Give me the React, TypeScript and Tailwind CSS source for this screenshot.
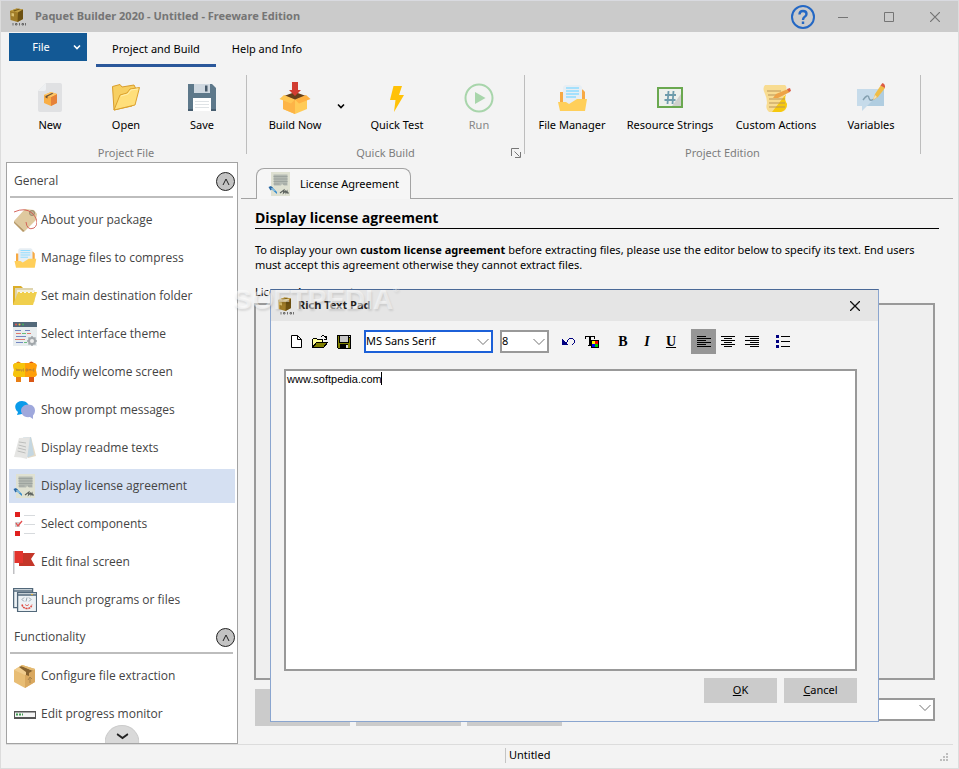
import type { ReactNode } from 'react';

type IconProps = { className?: string };

function PackageLogo({ className }: IconProps) {
  return (
    <svg viewBox="0 0 18 18" className={className} aria-hidden="true">
      <path d="M1 3 7.500.500 14 1.500v9.500L8.500 14 1.500 12z" fill="#a07c28" />
      <path d="M1 3 7.500.500 14 1.500 9 4.500z" fill="#c3a044" />
      <path d="m9 4.500 5-3V11l-5.500 3z" fill="#6d5112" />
      <path d="M2.500 5 5 5.500v3L2.500 8z" fill="#dcc272" />
      <path d="m4 2.500 6-1.800 1.500.3-6 2.500z" fill="#775a19" />
      <path d="M4 15v2.500M6.500 15.500h1.500v1.500H6.500zM10.500 15v2.500M13 15.500h1.500v1.500H13zM16.500 15v2.500" stroke="#444" strokeWidth=".7" fill="none" />
    </svg>
  );
}

function NewIcon({ className }: IconProps) {
  return (
    <svg viewBox="0 0 32 32" className={className} aria-hidden="true">
      <path d="M12 1h14q2 0 2 2v25q0 2-2 2H6q-2 0-2-2V9z" fill="#e0e1e3" />
      <path d="M12 1v6q0 2-2 2H4z" fill="#eef0f2" />
      <path d="m10 13 7-3 6 2v9l-6 3-7-3z" fill="#f9ae45" />
      <path d="m17 15 6-3v9l-6 3z" fill="#e6823a" />
      <path d="m10 13 7-3 6 2-6 3z" fill="#ffc766" />
      <path d="m11.500 14 6.500-3 1.500.5-6 3v2l-2-1z" fill="#6b5238" />
    </svg>
  );
}

function OpenIcon({ className }: IconProps) {
  return (
    <svg viewBox="0 0 32 32" className={className} aria-hidden="true">
      <path d="M2.500 4.500 10 2.500l2 2.500 12-2 1.500 3L22 24 4 28z" fill="#f7cf62" stroke="#d99d2b" />
      <path d="m10 13 7-2 3-4 9.500-1.500L25 23 4 28z" fill="#ffdf7b" stroke="#dca12c" />
      <path d="m11 14 7-2 3-4 7-1" stroke="#fff0ad" fill="none" />
    </svg>
  );
}

function SaveIcon({ className }: IconProps) {
  return (
    <svg viewBox="0 0 32 32" className={className} aria-hidden="true">
      <path d="M2 2h24l4 4v23H2z" fill="#5d788a" />
      <path d="M8 2h16v9H8z" fill="#cfd8e0" />
      <path d="M19 3.500h2.500v6H19z" fill="#465969" />
      <path d="M7 16h18v13H7z" fill="#fff" />
      <path d="M9 19.500h14M9 22.500h14M9 25.500h14" stroke="#dfe3e6" />
      <path d="M2 27h5v2H2zM25 27h5v2h-5z" fill="#465d6f" />
    </svg>
  );
}

function BuildIcon({ className }: IconProps) {
  return (
    <svg viewBox="0 0 32 32" className={className} aria-hidden="true">
      <path d="m4 15 12 3 12-3v12l-12 5-12-5z" fill="#ffcb57" />
      <path d="M4 15v12l12 5V18z" fill="#fdb447" />
      <path d="m5 14 11-4 11 4-11 4z" fill="#65401b" />
      <path d="M5 13 .500 17 12 21.500l4-4z" fill="#ffc653" />
      <path d="m27 13 4.500 4L20 21.500l-4-4z" fill="#ffb142" />
      <path d="M13 0h6v8h3l-6 6-6-6h3z" fill="#d13d32" />
    </svg>
  );
}

function QuickTestIcon({ className }: IconProps) {
  return (
    <svg viewBox="0 0 32 32" className={className} aria-hidden="true">
      <path d="M12.500 4H21l-3 9h5L13 30l1.500-12H9z" fill="#ffc107" />
    </svg>
  );
}

function RunIcon({ className }: IconProps) {
  return (
    <svg viewBox="0 0 32 32" className={className} aria-hidden="true">
      <circle cx="16" cy="16" r="13.500" fill="none" stroke="#a8d5ab" strokeWidth="2" />
      <path d="m12 10 10.500 6L12 22z" fill="#a8d5ab" />
    </svg>
  );
}

function FilesIcon({ className }: IconProps) {
  return (
    <svg viewBox="0 0 32 32" className={className} aria-hidden="true">
      <path d="M4 10h5v14H4zM23 10q0-3 2-3t4 3v12h-6z" fill="#f7a943" />
      <path d="M9 3h15l2 2v18H7V5z" fill="#e7eef3" />
      <path d="M10 6h13M10 9h13M10 12h13M10 15h10" stroke="#8fdcff" strokeWidth="1.300" />
      <path d="M2 20h8l3 2 8-5h10l-2 12H4z" fill="#ffcf5a" />
    </svg>
  );
}

function ResourceIcon({ className }: IconProps) {
  return (
    <svg viewBox="0 0 32 32" className={className} aria-hidden="true">
      <path d="M4 6h24v19H4z" fill="#edf0ec" stroke="#6aa84f" strokeWidth="2" />
      <path d="M27 12v12h-9z" fill="#cfd0cd" />
      <path d="m14.500 9-1 13M19.500 9l-1 13M11 13h11M10.500 18h11" stroke="#6e9cac" strokeWidth="1.800" />
    </svg>
  );
}

function ActionsIcon({ className }: IconProps) {
  return (
    <svg viewBox="0 0 32 32" className={className} aria-hidden="true">
      <path d="M5 3h20q3 2 0 7-2 6 2 12 0 7-6 8H9q-4-3-2-9 0-5-2-9-3-6 0-9z" fill="#f8dc91" />
      <path d="m26 12-14 18h9q6-2 6-8-3-4-1-10z" fill="#f6c90e" />
      <path d="M7 9h14M8 13h8M9 17h16M9 21h16M9 25h16" stroke="#b9955b" strokeWidth="1.200" />
      <path d="m13 16 3-4 12-5 2 3-12 6z" fill="#eda348" />
      <path d="m27 7 3-1 1 3-2 1z" fill="#d95e48" />
    </svg>
  );
}

function VariablesIcon({ className }: IconProps) {
  return (
    <svg viewBox="0 0 32 32" className={className} aria-hidden="true">
      <path d="M2 7h27v17H12l-5 5v-5H2z" fill="#c6dbea" />
      <path d="M29 7v17H12z" fill="#b0cde0" />
      <path d="M8 18q5-7 6-2 1 4 5 1" fill="none" stroke="#84a0b0" strokeWidth="1.400" />
      <path d="m18 18 2-6 6-9 4 3-7 9z" fill="#efbd48" />
      <path d="m18 18 2-5 2 2z" fill="#f5dfb7" />
      <path d="m25.500 3.500 2-2.500q3 1 2.500 5z" fill="#dc5b43" />
    </svg>
  );
}

function TagIcon({ className }: IconProps) {
  return (
    <svg viewBox="0 0 24 24" className={className} aria-hidden="true">
      <path d="M1 13 12 1l9 1 3 4-1 6-11 11z" fill="#dfc99f" />
      <path d="m1 13 11 10-2 1L1 15z" fill="#b89a68" />
      <circle cx="19" cy="5" r="2.500" fill="#bfae8e" stroke="#9b8a6c" />
      <path d="M1 4Q12-1 19 5c5 5 7 11 2 15q-7 3-8-6" fill="none" stroke="#d05850" strokeWidth=".9" />
    </svg>
  );
}

function FolderIcon({ className }: IconProps) {
  return (
    <svg viewBox="0 0 24 24" className={className} aria-hidden="true">
      <path d="M0 2h8l2 2h9v17H0z" fill="#dcae28" />
      <path d="M2 4h18v12H2z" fill="#dfd5ae" />
      <path d="M4 6h18v12H4z" fill="#f3efdf" />
      <path d="m5 8h19l-4 13H0z" fill="#f0cf4d" />
      <path d="M8 8v1M12 8v1M16 8v1M20 8v1" stroke="#faf8ef" strokeWidth="2" />
    </svg>
  );
}

function ThemeIcon({ className }: IconProps) {
  return (
    <svg viewBox="0 0 24 24" className={className} aria-hidden="true">
      <path d="M0 0h24v24H0z" fill="#e8edef" />
      <path d="M0 0h24v5H0z" fill="#53697a" />
      <circle cx="3" cy="2.500" r="1" fill="#ee5748" />
      <circle cx="6.500" cy="2.500" r="1" fill="#f4c13d" />
      <circle cx="10" cy="2.500" r="1" fill="#43b45c" />
      <path d="M2 8.500h6M12 8.500h5M3 14.500h10M3 20.500h7" stroke="#7387c2" />
      <path d="M3 11.500h5M14 11.500h4M2 17.500h10" stroke="#e0796d" />
      <path d="M9 11.500h4M11 20.500h3" stroke="#68bd7d" />
      <circle cx="19" cy="19" r="3" fill="#eee" stroke="#a1a7ab" strokeWidth="2" />
      <path d="M19 14v2M19 22v2M14 19h2M22 19h2M15.500 15.500l1.500 1.500M21 21l1.500 1.500M15.500 22.500 17 21M21 17l1.500-1.500" stroke="#a1a7ab" strokeWidth="1.500" />
    </svg>
  );
}

function WelcomeIcon({ className }: IconProps) {
  return (
    <svg viewBox="0 0 24 24" className={className} aria-hidden="true">
      <path d="M3 3q2-3 5 0v19H3z" fill="#e87f14" />
      <path d="M16 3q2-3 5 0v19h-5z" fill="#d95716" />
      <path d="M2 3h20l2 2-1 5 1 5-2 2H2l-2-2 1-5-1-5z" fill="#ff9f09" />
      <path d="M2 3h10v14H2l-2-2 1-5-1-5z" fill="#f6c40c" />
      <path d="M3 8.500 4 11l1-2 1 2 1-2M8 9v2h1M11 9h-1v2h1M13 9h1.500v2H13zM16 11V9l1 1 1-1v2M20 9h1.500M20 9v2h1.500" fill="none" stroke="#a87a45" strokeWidth=".7" />
    </svg>
  );
}

function ChatIcon({ className }: IconProps) {
  return (
    <svg viewBox="0 0 24 24" className={className} aria-hidden="true">
      <path d="M9 3c4 0 7 3 7 6s-3 7-7 7l-5 1 1-3c-5-4-3-11 4-11z" fill="#0a9bea" />
      <path d="M15 6.500c5 0 7 3 7 6 0 2-1 4-2 5v3.500l-3-2c-7 1-9-4-9-6.500 0-3 3-6 7-6z" fill="#9fa8dc" />
    </svg>
  );
}

function ReadmeIcon({ className }: IconProps) {
  return (
    <svg viewBox="0 0 24 24" className={className} aria-hidden="true">
      <path d="m14 2 4-1 5 19-8 2z" fill="#e4dac6" />
      <path d="m10 1.500 8-.5 3 18-8 3z" fill="#c5d7e1" />
      <path d="M6 2q6 0 11-1l-3 22q-6-2-13-2z" fill="#e5e5e3" />
      <path d="m6 6 7 1M5.500 9l7.500 2M5 12l8 2M4.500 15l8 2" stroke="#b3b4b3" strokeWidth=".8" />
    </svg>
  );
}

function LicenseIcon({ className }: IconProps) {
  return (
    <svg viewBox="0 0 24 24" className={className} aria-hidden="true">
      <path d="M3 0h19v24H3z" fill="#dfe1d2" />
      <path d="M5.500 2.500h14v11H16L14 12l-1 1.500H6z" fill="#b3b9b2" />
      <path d="M5.500 4.500h14M5.500 7h14M5.500 9.500h14M5.500 12h6M15 12h4" stroke="#9ba29d" strokeWidth=".9" />
      <path d="m2 16 2-1 5 5v2z" fill="#368dcd" />
      <path d="m.500 15 2.500-1 2 2-2.500 2.500z" fill="#2a6aa5" />
      <path d="m3.500 16 3 3" stroke="#c4e4f5" />
      <path d="m12 21 4-3-.5 3 2-2 .5 2 1-2 .5 2H21" fill="none" stroke="#5a605c" strokeWidth="1.100" />
    </svg>
  );
}

function ComponentsIcon({ className }: IconProps) {
  return (
    <svg viewBox="0 0 24 24" className={className} aria-hidden="true">
      <path d="M2 0h5v5H2zM2 19h5v5H2z" fill="#e0201e" />
      <path d="M2 10h5v5H2z" fill="#cfcfcf" />
      <path d="m3 11 2 3 4-5" fill="none" stroke="#e44c4c" strokeWidth="1.300" />
      <path d="M11 3.500h11M11 12.500h11M11 21.500h11" stroke="#d7dadd" />
    </svg>
  );
}

function FlagIcon({ className }: IconProps) {
  return (
    <svg viewBox="0 0 24 24" className={className} aria-hidden="true">
      <path d="M0 1h1.500v23H0z" fill="#c0c0c3" />
      <path d="M6 3h16l-4 6 4 7H6z" fill="#c43629" />
      <path d="M1.500 1H10v12H1.500z" fill="#e2342d" />
    </svg>
  );
}

function LaunchIcon({ className }: IconProps) {
  return (
    <svg viewBox="0 0 24 24" className={className} aria-hidden="true">
      <path d="M.600.600h19v19H.600z" fill="#edf2f5" stroke="#52687a" strokeWidth="1.300" />
      <path d="M1 3h18" stroke="#52687a" strokeWidth="1.500" />
      <path d="M4.600 4.600h19v19h-19z" fill="#edf2f5" stroke="#52687a" strokeWidth="1.300" />
      <path d="M5 7h18" stroke="#52687a" strokeWidth="1.500" />
      <path d="M18 6.500h2" stroke="#e3af3b" />
      <path d="m11 9.500-2 2 2 2M16 9.500l2 2-2 2M14 9.500l-1 4" fill="none" stroke="#8a98a3" strokeWidth=".9" />
      <path d="M9 16.500q1 4 5 4t5-4" fill="none" stroke="#dd4a40" strokeWidth="1.600" strokeDasharray="2 .7" />
      <path d="M12 16.500q2 2.500 4 0" fill="none" stroke="#dd4a40" strokeWidth=".8" />
    </svg>
  );
}

function BoxIcon({ className }: IconProps) {
  return (
    <svg viewBox="0 0 24 24" className={className} aria-hidden="true">
      <path d="m1 6 8-5 13 4v13l-10 6-11-6z" fill="#e8bd74" />
      <path d="m12 11 10-6v13l-10 6z" fill="#d9a85f" />
      <path d="m1 6 8-5 13 4-10 6z" fill="#f0cc8d" />
      <path d="m6 3 3-1 9 4 2 .500-4 2.500v3l-3-1V8z" fill="#86622f" />
      <path d="m9 1 13 4-3 1.500L8 2z" fill="#e3b970" />
      <path d="m15 16 2-3 2 2M17 13v6" fill="none" stroke="#a9834a" />
    </svg>
  );
}

function ProgressIcon({ className }: IconProps) {
  return (
    <svg viewBox="0 0 24 24" className={className} aria-hidden="true">
      <path d="M1 9h22v8H1z" fill="#555" />
      <path d="M2 10.500h20v4.500H2z" fill="#f5f5f5" />
      <path d="M3 11.500h2v2H3zM6 11.500h2v2H6zM9 11.500h1v2H9z" fill="#3f9c50" />
    </svg>
  );
}

function Chevron({ className }: IconProps) {
  return (
    <svg viewBox="0 0 8 8" className={className} aria-hidden="true">
      <path d="m1 2.500 3 3 3-3" fill="none" stroke="currentColor" strokeWidth="1.600" />
    </svg>
  );
}

function ComboArrow() {
  return (
    <svg viewBox="0 0 12 8" className="pointer-events-none absolute top-1/2 right-1 h-2 w-3 -translate-y-1/2 text-neutral-500" aria-hidden="true">
      <path d="m.500 1 5.500 5.500L11.500 1" fill="none" stroke="currentColor" />
    </svg>
  );
}

type RibbonButtonProps = {
  label: string;
  icon: ReactNode;
  width: string;
  disabled?: boolean;
};

function RibbonButton({ label, icon, width, disabled }: RibbonButtonProps) {
  return (
    <button
      type="button"
      disabled={disabled}
      className={`flex flex-col items-center whitespace-nowrap pt-[7px] text-black disabled:text-[#868686] ${width}`}
    >
      {icon}
      <span className="mt-[3px] leading-4">{label}</span>
    </button>
  );
}

function RibbonGroup({ title, children, launcher }: { title: string; children: ReactNode; launcher?: boolean }) {
  return (
    <section className="relative flex h-[79px] flex-col border-r border-[#bdbdbd]">
      <div className="flex">{children}</div>
      <h2 className="mt-3 text-center leading-4 text-[#7d7d7d]">{title}</h2>
      {launcher && (
        <button type="button" aria-label="Build options" className="absolute -bottom-1 right-[3px] size-[10px]">
          <svg viewBox="0 0 10 10" className="size-[10px]" fill="none" stroke="#777">
            <path d="M.500 8V.500H8M3.500 3.500l5 5M9.500 4v5.500H4" />
          </svg>
        </button>
      )}
    </section>
  );
}

const icon32 = 'size-8 shrink-0';
const icon24 = 'size-6 shrink-0';

const general = [
  { label: 'About your package', icon: <TagIcon className={icon24} /> },
  { label: 'Manage files to compress', icon: <FilesIcon className={icon24} /> },
  { label: 'Set main destination folder', icon: <FolderIcon className={icon24} /> },
  { label: 'Select interface theme', icon: <ThemeIcon className={icon24} /> },
  { label: 'Modify welcome screen', icon: <WelcomeIcon className={icon24} /> },
  { label: 'Show prompt messages', icon: <ChatIcon className={icon24} /> },
  { label: 'Display readme texts', icon: <ReadmeIcon className={icon24} /> },
  { label: 'Display license agreement', icon: <LicenseIcon className={icon24} />, active: true },
  { label: 'Select components', icon: <ComponentsIcon className={icon24} /> },
  { label: 'Edit final screen', icon: <FlagIcon className={icon24} /> },
  { label: 'Launch programs or files', icon: <LaunchIcon className={icon24} /> },
];

const functionality = [
  { label: 'Configure file extraction', icon: <BoxIcon className={icon24} /> },
  { label: 'Edit progress monitor', icon: <ProgressIcon className={icon24} /> },
];

type NavItem = { label: string; icon: ReactNode; active?: boolean };

function NavSection({ title, items }: { title: string; items: NavItem[] }) {
  return (
    <section className="mb-0.5">
      <div className="mr-1 ml-[3px] flex h-[35px] items-center border-b-2 border-[#bdbdbd] pt-[3px] pl-1">
        <h2 className="flex-1">{title}</h2>
        <button
          type="button"
          aria-label={`Collapse ${title}`}
          className="-mr-0.5 mt-px flex size-[19px] items-center justify-center rounded-full border border-[#222] bg-[#c3c3c3] text-[#222]"
        >
          <svg viewBox="0 0 8 8" className="size-2" fill="none" stroke="currentColor">
            <path d="m1 7 3-6 3 6" />
          </svg>
        </button>
      </div>
      <ul className="mx-0.5 mt-[5px] flex flex-col gap-1">
        {items.map((item) => (
          <li key={item.label}>
            <a
              href="#"
              className={`flex h-[34px] items-center gap-1 pl-1 whitespace-nowrap ${item.active ? 'bg-[#d5e0f2]' : ''}`}
            >
              {item.icon}
              <span>{item.label}</span>
            </a>
          </li>
        ))}
      </ul>
    </section>
  );
}

function TitleBar() {
  return (
    <header className="flex h-8 items-center border-t border-[#d9dae0] bg-[#cbcbcb] pl-2 text-[#757575]">
      <PackageLogo className="size-[18px]" />
      <h1 className="ml-2 flex-1 text-[11px] font-bold">Paquet Builder 2020 - Untitled - Freeware Edition</h1>
      <button type="button" aria-label="Help" className="mr-1">
        <svg viewBox="0 0 26 26" className="size-[26px]" fill="none" stroke="#2468c4" strokeWidth="2">
          <circle cx="13" cy="13" r="11" />
          <path d="M9.500 10.500q0-3.500 3.500-3.500t3.500 3q0 2-2 3-1.500 1-1.500 3" strokeWidth="2.400" />
          <path d="M13 17.500v2.500" strokeWidth="2.400" />
        </svg>
      </button>
      <button type="button" aria-label="Minimize" className="flex w-[46px] justify-center">
        <svg viewBox="0 0 10 10" className="size-[10px]" stroke="currentColor"><path d="M0 5.500h10" /></svg>
      </button>
      <button type="button" aria-label="Maximize" className="flex w-[46px] justify-center">
        <svg viewBox="0 0 10 10" className="size-[10px]" stroke="currentColor" fill="none"><path d="M.500.500h9v9h-9z" /></svg>
      </button>
      <button type="button" aria-label="Close" className="flex w-[46px] justify-center">
        <svg viewBox="0 0 10 10" className="size-[10px]" stroke="currentColor" strokeWidth="1.200"><path d="m0 0 10 10M10 0 0 10" /></svg>
      </button>
    </header>
  );
}

function Ribbon() {
  return (
    <div>
      <nav className="flex h-[35px] items-start pt-px pl-2">
        <button type="button" className="flex h-7 w-[78px] items-center bg-[#135995] pr-[6px] text-white">
          <span className="flex-1">File</span>
          <Chevron className="size-2" />
        </button>
        <button type="button" className="ml-[9px] h-[34px] w-[120px] border-b-[3px] border-[#2a579a] pt-0.5">Project and Build</button>
        <button type="button" className="h-[34px] w-[102px] border-b-[3px] border-transparent pt-0.5">Help and Info</button>
      </nav>
      <div className="mt-2 mb-2 flex pl-[5px]">
        <RibbonGroup title="Project File">
          <div className="flex px-1.5">
            <RibbonButton label="New" width="w-[76px]" icon={<NewIcon className={icon32} />} />
            <RibbonButton label="Open" width="w-[76px]" icon={<OpenIcon className={icon32} />} />
            <RibbonButton label="Save" width="w-[76px]" icon={<SaveIcon className={icon32} />} />
          </div>
        </RibbonGroup>
        <RibbonGroup title="Quick Build" launcher>
          <div className="flex pr-[3px] pl-3">
            <RibbonButton label="Build Now" width="w-[72px]" icon={<BuildIcon className={icon32} />} />
            <button type="button" aria-label="More build commands" className="mr-1.5 flex w-5 items-center justify-center pt-1">
              <Chevron className="size-2" />
            </button>
            <RibbonButton label="Quick Test" width="w-20" icon={<QuickTestIcon className={icon32} />} />
            <RibbonButton label="Run" width="w-[84px]" disabled icon={<RunIcon className={icon32} />} />
          </div>
        </RibbonGroup>
        <RibbonGroup title="Project Edition">
          <div className="flex pr-2 pl-px">
            <RibbonButton label="File Manager" width="w-[92px]" icon={<FilesIcon className={icon32} />} />
            <RibbonButton label="Resource Strings" width="w-[104px]" icon={<ResourceIcon className={icon32} />} />
            <RibbonButton label="Custom Actions" width="w-[108px]" icon={<ActionsIcon className={icon32} />} />
            <RibbonButton label="Variables" width="w-[82px]" icon={<VariablesIcon className={icon32} />} />
          </div>
        </RibbonGroup>
      </div>
    </div>
  );
}

function LicensePage() {
  return (
    <main className="flex min-w-0 flex-1 flex-col pl-[3px]">
      <div className="mr-[5px] flex h-[37px] items-end border-b border-[#a3a3a3] pl-[15px]">
        <a
          href="#"
          className="-mb-px flex h-[31px] w-[155px] items-center rounded-t-lg border border-b-0 border-[#a3a3a3] bg-[#f6f6f6] pl-[11px]"
        >
          <LicenseIcon className={icon24} />
          <span className="ml-2">License Agreement</span>
        </a>
      </div>
      <div className="flex flex-1 flex-col pt-2 pr-[19px] pl-3.5">
        <h2 className="border-b border-black text-sm leading-[21px] font-bold font-['Open_Sans',sans-serif]">Display license agreement</h2>
        <p className="mt-[13px] leading-[15px]">
          To display your own <b>custom license agreement</b> before extracting files, please use the editor below to specify its text. End users must accept this agreement otherwise they cannot extract files.
        </p>
        <label htmlFor="license-text" className="mt-3 leading-4">License Agreement</label>
        <textarea id="license-text" className="mt-[3px] mr-1 -ml-px flex-1 resize-none border-2 border-[#999] bg-[#efefef]" />
        <div className="mt-[9px] mr-1 mb-[18px] flex h-[37px] items-center gap-1.5">
          <button type="button" aria-label="Edit" className="h-full w-[95px] bg-[#cbcbcb]" />
          <button type="button" aria-label="Load" className="h-full w-[105px] bg-[#cbcbcb]" />
          <button type="button" aria-label="Clear" className="h-full w-[95px] bg-[#cbcbcb]" />
          <div className="relative ml-auto w-[200px] pt-1">
            <select aria-label="Language" className="block h-[23px] w-full appearance-none border-2 border-[#999] bg-white" />
            <ComboArrow />
          </div>
        </div>
      </div>
    </main>
  );
}

function ToolButton({ label, className = 'w-6', children }: { label: string; className?: string; children: ReactNode }) {
  return (
    <button type="button" aria-label={label} className={`flex h-[25px] shrink-0 items-center justify-center ${className}`}>
      {children}
    </button>
  );
}

function LinesIcon({ d }: { d: string }) {
  return (
    <svg viewBox="0 0 14 12" className="h-3 w-3.5" stroke="#000" shapeRendering="crispEdges" aria-hidden="true">
      <path d={d} />
    </svg>
  );
}

function RichTextPad() {
  return (
    <div role="dialog" aria-labelledby="pad-title" className="absolute top-[289px] left-[269px] w-[609px] border border-[#8aa5cf] border-t-[#4a6997] bg-[#f3f3f3]">
      <div className="flex h-[31px] items-center bg-[#e5e5e5] pl-1.5">
        <PackageLogo className="size-[18px]" />
        <h2 id="pad-title" className="ml-[3px] flex-1 text-[11px] font-bold text-[#222]">Rich Text Pad</h2>
        <button type="button" aria-label="Close pad" className="flex w-[46px] justify-center">
          <svg viewBox="0 0 10 10" className="size-[10px]" stroke="#111" strokeWidth="1.300"><path d="m0 0 10 10M10 0 0 10" /></svg>
        </button>
      </div>
      <div className="flex flex-col pt-2 pr-[21px] pb-[18px] pl-[13px]">
        <div className="flex items-center">
          <ToolButton label="New document">
            <svg viewBox="0 0 11 13" className="h-[13px] w-[11px]" fill="#fff" stroke="#000"><path d="M.500.500h6l4 4v8H.500zM6.500.500v4h4" /></svg>
          </ToolButton>
          <ToolButton label="Open document">
            <svg viewBox="0 0 16 13" className="h-[13px] w-4" stroke="#000" shapeRendering="crispEdges">
              <path d="M.500 12V4.500l1-1h3l1 1h5v3h-6z" fill="#ffff9a" />
              <path d="m.500 12.500 4-5h11l-4 5z" fill="#808000" />
              <path d="M8.500 2.500q3-4 6 1M14.500 1v3H12" fill="none" />
            </svg>
          </ToolButton>
          <ToolButton label="Save document">
            <svg viewBox="0 0 14 14" className="size-3.5" shapeRendering="crispEdges">
              <path d="M0 0h14v14H1l-1-1z" fill="#000" />
              <path d="M1 1h1v7h10V3h1v10H1z" fill="#808000" />
              <path d="M3 1h8v6H3z" fill="#c6c6c6" />
              <path d="M3 9h8v5H3z" fill="#000" />
              <path d="M9 10h2v3H9zM12 1h1v1h-1z" fill="#ddd" />
            </svg>
          </ToolButton>
          <div className="relative ml-2 w-[129px]">
            <select aria-label="Font" className="block h-[23px] w-full appearance-none border-2 border-[#1c60d8] bg-white pb-0.5 leading-4">
              <option>MS Sans Serif</option>
            </select>
            <ComboArrow />
          </div>
          <div className="relative ml-[7px] w-[49px]">
            <select aria-label="Font size" className="block h-[23px] w-full appearance-none border-2 border-[#999] bg-white pb-0.5 leading-4">
              <option>8</option>
            </select>
            <ComboArrow />
          </div>
          <ToolButton label="Undo" className="ml-[7px] w-6">
            <svg viewBox="0 0 13 8" className="h-2 w-[13px]" fill="none" stroke="#000080" shapeRendering="crispEdges">
              <path d="M4 4.500h1M5 3.500h1M6 1.500h1M7 .500h4M11 1.500h1M12.500 2v3M11 5.500h1M10 6.500h1M5.500 2v2" />
              <path d="M0 1h1v1h1v1h1v1h1v1h1v1h1v1H0z" fill="#000080" stroke="none" />
            </svg>
          </ToolButton>
          <ToolButton label="Text colour">
            <svg viewBox="0 0 14 12" className="h-3 w-3.5" shapeRendering="crispEdges">
              <path d="M0 0h10v3H9V1H6v8h1v1H3V9h1V1H1v2H0z" fill="#000" />
              <path d="M6 4h8v8H6z" fill="#000" />
              <path d="M7 5h3v3H7z" fill="#ff0" />
              <path d="M10 5h3v3h-3z" fill="#f00" />
              <path d="M7 8h3v3H7z" fill="#00f" />
              <path d="M10 8h3v3h-3z" fill="#0c0" />
            </svg>
          </ToolButton>
          <ToolButton label="Bold" className="ml-[7px] w-6">
            <span className="font-['Liberation_Serif',serif] text-sm font-black">B</span>
          </ToolButton>
          <ToolButton label="Italic">
            <span className="font-['Liberation_Serif',serif] text-sm font-bold italic">I</span>
          </ToolButton>
          <ToolButton label="Underline">
            <span className="font-['Liberation_Serif',serif] text-sm font-bold underline">U</span>
          </ToolButton>
          <ToolButton label="Align left" className="ml-2 w-[25px] bg-[#969696]">
            <LinesIcon d="M0 .500h9M0 2.500h14M0 4.500h9M0 6.500h14M0 8.500h9M0 10.500h14" />
          </ToolButton>
          <ToolButton label="Align centre">
            <LinesIcon d="M0 .500h14M3 2.500h8M0 4.500h14M3 6.500h8M0 8.500h14M3 10.500h8" />
          </ToolButton>
          <ToolButton label="Align right">
            <LinesIcon d="M0 .500h14M5 2.500h9M0 4.500h14M5 6.500h9M0 8.500h14M5 10.500h9" />
          </ToolButton>
          <ToolButton label="Bullets" className="ml-[7px] w-6">
            <svg viewBox="0 0 14 13" className="h-[13px] w-3.5" shapeRendering="crispEdges">
              <path d="M0 0h3v3H0zM0 5h3v3H0zM0 10h3v3H0z" fill="#000080" />
              <path d="M5 1h9v1H5zM5 6h9v1H5zM5 11h9v1H5z" fill="#000" />
            </svg>
          </ToolButton>
        </div>
        <div className="relative mt-[15px]">
          <textarea
            aria-label="Text"
            defaultValue="www.softpedia.com"
            spellCheck={false}
            className="block h-[302px] w-full resize-none border-2 border-[#999] bg-white px-px py-0.5 font-['Liberation_Sans',sans-serif] text-[11px] leading-[13px] text-black"
          />
          <span className="absolute top-[3px] left-[97px] h-[13px] w-px bg-black" />
        </div>
        <div className="mt-[7px] flex justify-end gap-[7px]">
          <button type="button" className="h-[25px] w-[73px] bg-[#cbcbcb]"><u>O</u>K</button>
          <button type="button" className="h-[25px] w-[73px] bg-[#cbcbcb]"><u>C</u>ancel</button>
        </div>
      </div>
    </div>
  );
}

export default function App() {
  return (
    <div className="relative flex min-h-screen flex-col border-x border-b border-[#dcdcdc] bg-[#f3f3f3] font-['Noto_Sans','Open_Sans',sans-serif] text-[11px] text-black">
      <TitleBar />
      <Ribbon />
      <div className="flex flex-1">
        <aside className="relative ml-[5px] w-[232px] shrink-0 overflow-hidden border border-[#a3a3a3] bg-white font-['Open_Sans',sans-serif] text-xs text-[#444]">
          <NavSection title="General" items={general} />
          <NavSection title="Functionality" items={functionality} />
          <button
            type="button"
            aria-label="Scroll down"
            className="absolute bottom-0 left-1/2 flex h-[18px] w-[35px] -translate-x-1/2 items-center justify-center rounded-t-full border border-b-0 border-[#ccc] bg-[#d9d9d9] text-[#222]"
          >
            <svg viewBox="0 0 12 7" className="mt-1 h-[7px] w-3" fill="none" stroke="currentColor" strokeWidth="2">
              <path d="m.500 1 5.500 4L11.500 1" />
            </svg>
          </button>
        </aside>
        <LicensePage />
      </div>
      <footer className="mx-[5px] flex h-6 items-start border-t border-[#dcdcdc]">
        <div className="flex-1" />
        <div className="mt-[3px] flex h-[15px] w-[448px] items-center border-l border-[#c4c4c4] pl-[3px]">
          <span className="flex-1">Untitled</span>
          <svg viewBox="0 0 10 10" className="mt-1 mr-[3px] size-[10px]" fill="#bdbdbd">
            <path d="M6 0h2v2H6zM3 3h2v2H3zM6 3h2v2H6zM0 6h2v2H0zM3 6h2v2H3zM6 6h2v2H6z" />
          </svg>
        </div>
      </footer>
      <RichTextPad />
      <div className="pointer-events-none absolute top-[284px] left-[232px] flex items-start font-['Liberation_Sans',sans-serif] text-[28px] leading-8 font-bold text-white/50 [text-shadow:1px_2px_2px_rgba(0,0,0,0.1)]">
        SOFTPEDIA
        <span className="text-[8px] leading-3">®</span>
      </div>
    </div>
  );
}
